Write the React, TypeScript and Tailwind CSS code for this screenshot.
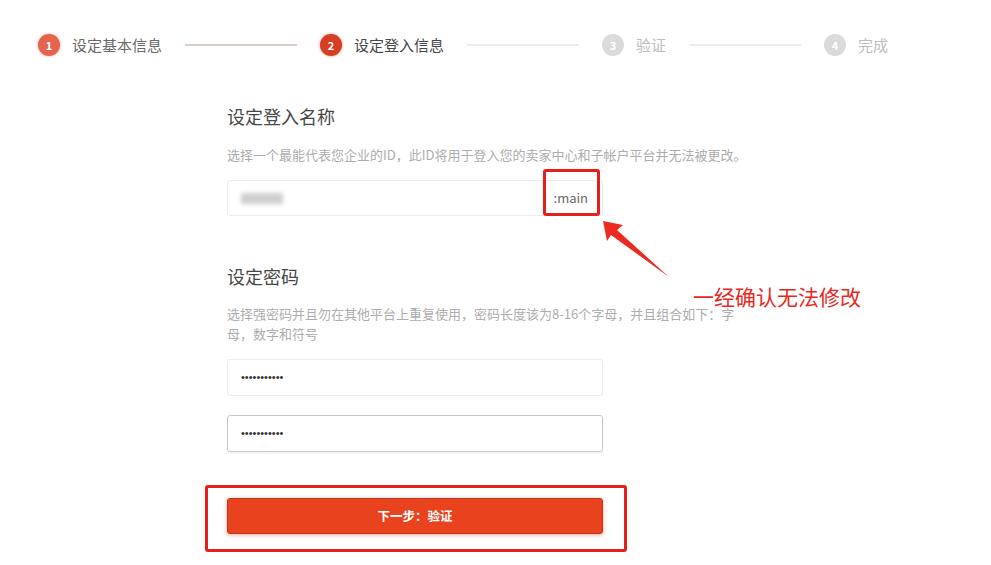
const cjk = { fontFamily: '"Noto Sans CJK SC", "Liberation Sans", sans-serif' }

const steps = [
  { n: 1, label: '设定基本信息', state: 'done' },
  { n: 2, label: '设定登入信息', state: 'active' },
  { n: 3, label: '验证', state: 'todo' },
  { n: 4, label: '完成', state: 'todo' },
]

function Stepper() {
  return (
    <div className="flex items-center pl-[38px] pt-[34px]">
      {steps.map((s, i) => (
        <div key={s.n} className="flex items-center">
          <div
            className={
              s.state === 'done'
                ? 'flex h-[22px] w-[22px] items-center justify-center rounded-full bg-[#e5644e] text-[11px] font-bold text-white shadow-[0_0_3px_rgba(229,100,78,0.6)]'
                : s.state === 'active'
                  ? 'flex h-[22px] w-[22px] items-center justify-center rounded-full bg-[#d63f26] text-[11px] font-bold text-white shadow-[0_0_3px_rgba(214,63,38,0.6)]'
                  : 'flex h-[22px] w-[22px] items-center justify-center rounded-full bg-[#dadada] text-[11px] font-bold text-white'
            }
          >
            {s.n}
          </div>
          <span
            className={
              s.state === 'done'
                ? 'ml-[12px] text-[15px] leading-[22px] text-[#6a6a6a]'
                : s.state === 'active'
                  ? 'ml-[12px] text-[15px] leading-[22px] text-[#474747]'
                  : 'ml-[12px] text-[15px] leading-[22px] text-[#bdbdbd]'
            }
          >
            {s.label}
          </span>
          {i < steps.length - 1 && (
            <div
              className={
                i === 0
                  ? 'mx-[23px] h-[2px] w-[112px] bg-[#dccbc7]'
                  : 'mx-[23px] h-[2px] w-[112px] bg-[#eeeeee]'
              }
            />
          )}
        </div>
      ))}
    </div>
  )
}

function Dots() {
  return (
    <span className="text-[11px] leading-none tracking-[0px] text-[#333]" style={{ fontFamily: '"Liberation Sans", sans-serif' }}>
      •••••••••••
    </span>
  )
}

export default function App() {
  return (
    <div className="relative h-[565px] w-[991px] overflow-hidden bg-white" style={cjk}>
      <Stepper />

      <div className="ml-[227px] mt-[47px] flex w-[520px] flex-col">
        <h2 className="text-[18px] leading-[26px] text-[#474747]">设定登入名称</h2>
        <p className="mt-[16px] text-[13px] leading-[20px] text-[#adadad]">
          选择一个最能代表您企业的ID，此ID将用于登入您的卖家中心和子帐户平台并无法被更改。
        </p>

        <div className="relative mt-[15px] flex h-[36px] w-[376px] items-center justify-between rounded-[3px] border border-[#ececec] pl-[13px] pr-[14px]">
          <div className="h-[11px] w-[42px] bg-[#cfcfcf] blur-[2px]" />
          <span className="text-[13px] text-[#666]">:main</span>
          <div className="absolute -top-[12px] -bottom-[1px] right-[2px] w-[57px] rounded-[3px] border-[3px] border-[#e3201b]" />
        </div>

        <h2 className="mt-[47px] text-[18px] leading-[26px] text-[#474747]">设定密码</h2>
        <p className="mt-[15px] text-[13px] leading-[20px] text-[#adadad]">
          选择强密码并且勿在其他平台上重复使用，密码长度该为8-16个字母，并且组合如下：字母，数字和符号
        </p>

        <div className="mt-[15px] flex h-[37px] w-[376px] items-center rounded-[3px] border border-[#ececec] pl-[13px]">
          <Dots />
        </div>
        <div className="mt-[19px] flex h-[37px] w-[376px] items-center rounded-[3px] border border-[#c9c9c9] pl-[13px] shadow-[0_1px_2px_rgba(0,0,0,0.08)]">
          <Dots />
        </div>

        <div className="relative mt-[46px] w-[376px]">
          <button className="flex h-[36px] w-full items-center justify-center rounded-[3px] border border-[#c53518] bg-[#e8421f] text-[12.5px] font-bold text-white shadow-[0_1px_4px_rgba(232,66,31,0.45)]">
            下一步：验证
          </button>
          <div className="absolute -left-[22px] -right-[24px] -top-[13px] -bottom-[18px] rounded-[3px] border-[3px] border-[#e3201b]" />
        </div>
      </div>

      <svg className="absolute left-[598px] top-[216px]" width="76" height="66" viewBox="0 0 76 66">
        <polygon points="5,5 25,9 19,14 71,61 13,19 9,25" fill="#ec2a1f" />
      </svg>
      <div className="absolute left-[693px] top-[281px] text-[21px] leading-[30px] text-[#e8281e]">一经确认无法修改</div>
    </div>
  )
}
